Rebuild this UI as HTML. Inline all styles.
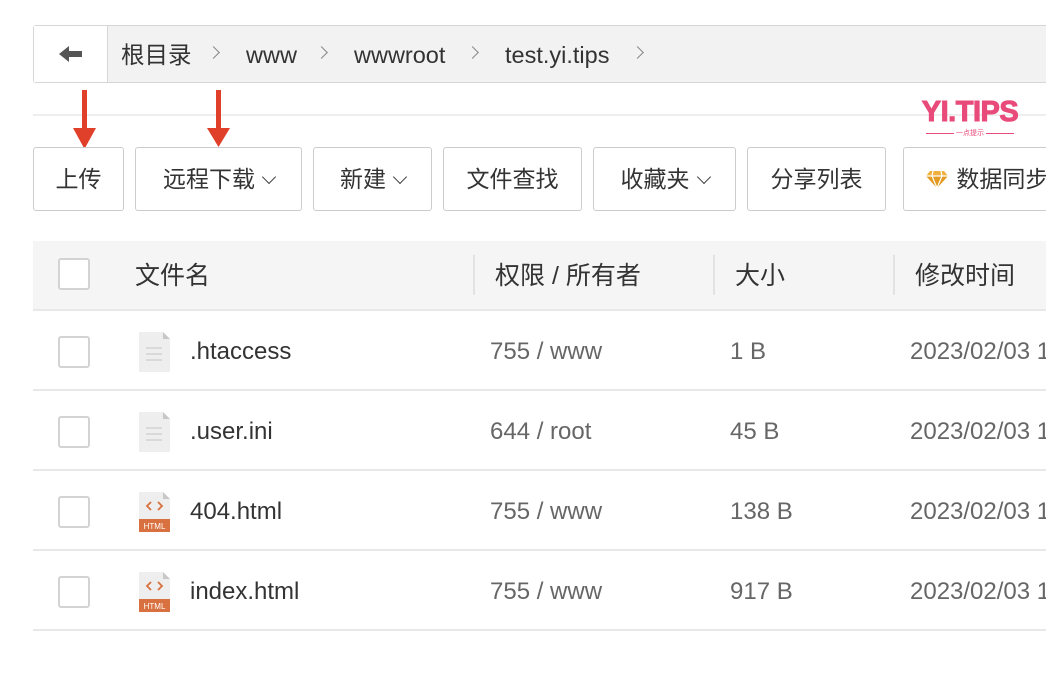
<!DOCTYPE html>
<html><head><meta charset="utf-8"><style>
*{margin:0;padding:0;box-sizing:border-box}
body{width:1046px;height:692px;background:#fff;position:relative;overflow:hidden;font-family:"Liberation Sans","Noto Sans CJK SC",sans-serif;color:#333}
.abs{position:absolute}
.crumb{left:33px;top:25px;width:1030px;height:58px;border:1px solid #d6d6d6;border-radius:3px;background:#f2f2f2}
.back{left:0;top:0;width:74px;height:56px;background:#fff;border-right:1px solid #d6d6d6}
.ci{top:0;line-height:58px;font-size:23.5px;color:#333;white-space:nowrap}
.sep{top:22px;width:9px;height:9px;border-right:1.5px solid #888;border-top:1.5px solid #888;transform:rotate(45deg)}
.hr{left:33px;top:114px;width:1013px;height:2px;background:#eee}
.btn{top:147px;height:64px;border:1px solid #ccc;border-radius:3px;font-size:23px;line-height:63px;text-align:center;color:#333;background:#fff;white-space:nowrap}
.chev{display:inline-block;width:10px;height:10px;border-right:1.5px solid #444;border-bottom:1.5px solid #444;transform:rotate(45deg);margin-left:9px;position:relative;top:-5px}
.thead{left:33px;top:241px;width:1013px;height:70px;background:#f5f5f5;border-bottom:2px solid #e8e8e8}
.th{top:0;line-height:70px;font-size:25px;color:#333;white-space:nowrap}
.vd{top:14px;width:2px;height:40px;background:#e2e2e2}
.row{left:33px;width:1013px;height:80px;border-bottom:2px solid #e8e8e8}
.cb{left:25px;top:25px;width:32px;height:32px;border:2px solid #d3d3d3;border-radius:3px;background:#fff}
.td{top:0;line-height:81px;font-size:24px;color:#666;white-space:nowrap}
.nm{color:#333}
</style></head><body>
<div class="abs crumb">
 <div class="abs back"><svg width="74" height="56"><path d="M25 28 L35 20 L35 25 L48 25 L48 31 L35 31 L35 36 Z" fill="#555"/></svg></div>
 <div class="abs ci" style="left:87px">根目录</div>
 <div class="abs sep" style="left:175px"></div>
 <div class="abs ci" style="left:212px">www</div>
 <div class="abs sep" style="left:283px"></div>
 <div class="abs ci" style="left:320px">wwwroot</div>
 <div class="abs sep" style="left:434px"></div>
 <div class="abs ci" style="left:471px">test.yi.tips</div>
 <div class="abs sep" style="left:599px"></div>
</div>
<div class="abs hr"></div>
<svg class="abs" style="left:70px;top:88px" width="30" height="62"><rect x="12" y="2" width="5" height="40" fill="#e0402a"/><path d="M3 40 L26 40 L14.5 61 Z" fill="#e0402a"/></svg>
<svg class="abs" style="left:204px;top:88px" width="30" height="60"><rect x="12" y="2" width="5" height="40" fill="#e0402a"/><path d="M3 40 L26 40 L14.5 59 Z" fill="#e0402a"/></svg>
<div class="abs" style="left:914px;top:96px;width:112px;text-align:center;font:bold 29px 'Liberation Sans',sans-serif;color:#e84a7a;letter-spacing:-0.5px;-webkit-text-stroke:1px #e84a7a;white-space:nowrap">YI.TIPS</div>
<div class="abs" style="left:924px;top:129px;width:92px;height:10px;font-size:7px;line-height:10px;text-align:center;color:#e84a7a;white-space:nowrap"><span style="display:inline-block;width:28px;border-top:1px solid #e84a7a;vertical-align:middle"></span> 一点提示 <span style="display:inline-block;width:28px;border-top:1px solid #e84a7a;vertical-align:middle"></span></div>
<div class="abs btn" style="left:33px;width:91px">上传</div>
<div class="abs btn" style="left:135px;width:167px">远程下载<span class="chev"></span></div>
<div class="abs btn" style="left:313px;width:119px">新建<span class="chev"></span></div>
<div class="abs btn" style="left:443px;width:139px">文件查找</div>
<div class="abs btn" style="left:593px;width:143px">收藏夹<span class="chev"></span></div>
<div class="abs btn" style="left:747px;width:139px">分享列表</div>
<div class="abs btn" style="left:903px;width:160px;text-align:left;padding-left:20px"><svg width="26" height="22" style="vertical-align:-3px"><path d="M6 3 L20 3 L24 8 L13 20 L2 8 Z" fill="#f0b040"/><path d="M2 8 L24 8 L13 20 Z" fill="#e39a20"/><path d="M2 8 L24 8 M9 3 L8 8 L13 20 L18 8 L17 3" stroke="#fff" stroke-width="1.2" fill="none"/></svg> 数据同步</div>
<div class="abs thead">
 <div class="abs cb" style="top:17px"></div>
 <div class="abs th" style="left:102px">文件名</div>
 <div class="abs vd" style="left:440px"></div>
 <div class="abs th" style="left:462px">权限 / 所有者</div>
 <div class="abs vd" style="left:680px"></div>
 <div class="abs th" style="left:702px">大小</div>
 <div class="abs vd" style="left:860px"></div>
 <div class="abs th" style="left:882px">修改时间</div>
</div>
<div class="abs row" style="top:311px"><div class="abs cb"></div>
 <svg class="abs" style="left:106px;top:21px" width="32" height="40"><path d="M0 0 H24 L31 7 V40 H0 Z" fill="#eee"/><path d="M24 0 L31 7 H24 Z" fill="#c8c8c8"/><path d="M7 16 H23 M7 22 H23 M7 28 H23" stroke="#d2d2d2" stroke-width="1.5"/></svg>
 <div class="abs td nm" style="left:157px">.htaccess</div><div class="abs td" style="left:457px">755 / www</div><div class="abs td" style="left:697px">1 B</div><div class="abs td" style="left:877px">2023/02/03 1</div></div>
<div class="abs row" style="top:391px"><div class="abs cb"></div>
 <svg class="abs" style="left:106px;top:21px" width="32" height="40"><path d="M0 0 H24 L31 7 V40 H0 Z" fill="#eee"/><path d="M24 0 L31 7 H24 Z" fill="#c8c8c8"/><path d="M7 16 H23 M7 22 H23 M7 28 H23" stroke="#d2d2d2" stroke-width="1.5"/></svg>
 <div class="abs td nm" style="left:157px">.user.ini</div><div class="abs td" style="left:457px">644 / root</div><div class="abs td" style="left:697px">45 B</div><div class="abs td" style="left:877px">2023/02/03 1</div></div>
<div class="abs row" style="top:471px"><div class="abs cb"></div>
 <svg class="abs" style="left:106px;top:21px" width="32" height="40"><path d="M0 0 H24 L31 7 V40 H0 Z" fill="#eee"/><path d="M24 0 L31 7 H24 Z" fill="#c8c8c8"/><path d="M12 10 L8 14 L12 18 M19 10 L23 14 L19 18" stroke="#d9703f" stroke-width="1.8" fill="none"/><rect x="0" y="27" width="31" height="13" fill="#d9703f"/><text x="15.5" y="37" font-size="8" fill="#fff" text-anchor="middle" font-family="Liberation Sans">HTML</text></svg>
 <div class="abs td nm" style="left:157px">404.html</div><div class="abs td" style="left:457px">755 / www</div><div class="abs td" style="left:697px">138 B</div><div class="abs td" style="left:877px">2023/02/03 1</div></div>
<div class="abs row" style="top:551px"><div class="abs cb"></div>
 <svg class="abs" style="left:106px;top:21px" width="32" height="40"><path d="M0 0 H24 L31 7 V40 H0 Z" fill="#eee"/><path d="M24 0 L31 7 H24 Z" fill="#c8c8c8"/><path d="M12 10 L8 14 L12 18 M19 10 L23 14 L19 18" stroke="#d9703f" stroke-width="1.8" fill="none"/><rect x="0" y="27" width="31" height="13" fill="#d9703f"/><text x="15.5" y="37" font-size="8" fill="#fff" text-anchor="middle" font-family="Liberation Sans">HTML</text></svg>
 <div class="abs td nm" style="left:157px">index.html</div><div class="abs td" style="left:457px">755 / www</div><div class="abs td" style="left:697px">917 B</div><div class="abs td" style="left:877px">2023/02/03 1</div></div>
</body></html>
